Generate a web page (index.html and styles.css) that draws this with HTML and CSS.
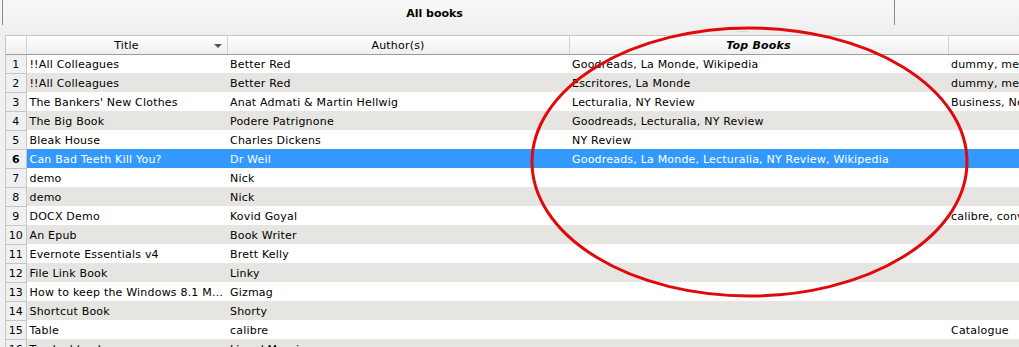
FILE: index.html
```html
<!DOCTYPE html>
<html>
	<head>
		<meta charset="UTF-8">
		<title>All books</title>
		<link rel="stylesheet" href="styles.css">
	</head>
	<body>
		<div class="wrap">
			<div class="toolbar">
				<div class="toolbar-main">All books</div>
				<div class="toolbar-side"></div>
				<div class="grip">......</div>
			</div>
			<div class="grid">
				<table class="books">
					<colgroup>
						<col class="c-num">
						<col class="c-title">
						<col class="c-author">
						<col class="c-top">
						<col class="c-tags">
					</colgroup>
					<thead>
						<tr>
							<th class="num"></th>
							<th class="sorted">Title<span class="arrow"></span></th>
							<th>Author(s)</th>
							<th class="custom">Top Books</th>
							<th></th>
						</tr>
					</thead>
					<tbody>
						<tr><td class="num">1</td><td>!!All Colleagues</td><td>Better Red</td><td>Goodreads, La Monde, Wikipedia</td><td>dummy, meta</td></tr>
						<tr><td class="num">2</td><td>!!All Colleagues</td><td>Better Red</td><td>Escritores, La Monde</td><td>dummy, meta</td></tr>
						<tr><td class="num">3</td><td>The Bankers' New Clothes</td><td>Anat Admati &amp; Martin Hellwig</td><td>Lecturalia, NY Review</td><td>Business, News</td></tr>
						<tr><td class="num">4</td><td>The Big Book</td><td>Podere Patrignone</td><td>Goodreads, Lecturalia, NY Review</td><td></td></tr>
						<tr><td class="num">5</td><td>Bleak House</td><td>Charles Dickens</td><td>NY Review</td><td></td></tr>
						<tr class="selected"><td class="num">6</td><td>Can Bad Teeth Kill You?</td><td>Dr Weil</td><td>Goodreads, La Monde, Lecturalia, NY Review, Wikipedia</td><td></td></tr>
						<tr><td class="num">7</td><td>demo</td><td>Nick</td><td></td><td></td></tr>
						<tr><td class="num">8</td><td>demo</td><td>Nick</td><td></td><td></td></tr>
						<tr><td class="num">9</td><td>DOCX Demo</td><td>Kovid Goyal</td><td></td><td>calibre, conversion</td></tr>
						<tr><td class="num">10</td><td>An Epub</td><td>Book Writer</td><td></td><td></td></tr>
						<tr><td class="num">11</td><td>Evernote Essentials v4</td><td>Brett Kelly</td><td></td><td></td></tr>
						<tr><td class="num">12</td><td>File Link Book</td><td>Linky</td><td></td><td></td></tr>
						<tr><td class="num">13</td><td>How to keep the Windows 8.1 M…</td><td>Gizmag</td><td></td><td></td></tr>
						<tr><td class="num">14</td><td>Shortcut Book</td><td>Shorty</td><td></td><td></td></tr>
						<tr><td class="num">15</td><td>Table</td><td>calibre</td><td></td><td>Catalogue</td></tr>
						<tr><td class="num">16</td><td>Tracked book</td><td>Lionel Marais</td><td></td><td></td></tr>
					</tbody>
				</table>
			</div>
			<!--红圈标注-->
			<svg class="circle" width="1019" height="347" viewBox="0 0 1019 347">
				<ellipse cx="749.5" cy="162" rx="217.5" ry="134" fill="none" stroke="#e00a0a" stroke-width="3"/>
			</svg>
		</div>
	</body>
</html>
```
FILE: styles.css
```css
*{
	margin: 0;
	padding: 0;
	box-sizing: border-box;
}
body{
	width: 1019px;
	height: 347px;
	overflow: hidden;
	background-color: #f0f0f0;
	font-family: "DejaVu Sans", Verdana, sans-serif;
	font-size: 11px;
	color: #000;
}
.wrap{
	position: relative;
	height: 100%;
}
.toolbar{
	height: 35px;
	display: flex;
	position: relative;
	background: linear-gradient(#f8f8f8, #eeeeee);
}
.toolbar-main{
	width: 893px;
	height: 25px;
	margin-left: 2px;
	border-left: 1px solid #8a8a8a;
	border-right: 1px solid #8a8a8a;
	text-align: center;
	line-height: 27px;
	font-weight: bold;
	padding-right: 28px;
}
.toolbar-side{
	flex: 1;
}
.grip{
	position: absolute;
	left: 737px;
	top: 26px;
	font-size: 6px;
	color: #9a9a9a;
}
.grid{
	margin-left: 5px;
	overflow: hidden;
	height: 312px;
	background-color: #fff;
	border-top: 1px solid #c6c6c6;
	border-left: 1px solid #c6c6c6;
}
.books{
	border-collapse: collapse;
	table-layout: fixed;
	width: 1080px;
	letter-spacing: 0.2px;
}
.c-num{ width: 20px; }
.c-title{ width: 201px; }
.c-author{ width: 342px; }
.c-top{ width: 379px; }
.c-tags{ width: 138px; }
.books th{
	height: 18px;
	font-weight: normal;
	text-align: center;
	background: linear-gradient(#ffffff, #eeeeee);
	border-right: 1px solid #d2d2d2;
	border-bottom: 1px solid #9c9c9c;
	position: relative;
	white-space: nowrap;
	padding-top: 2px;
}
.books th.custom{
	font-weight: bold;
	font-style: italic;
}
.arrow{
	position: absolute;
	right: 5px;
	top: 8px;
	border-left: 4px solid transparent;
	border-right: 4px solid transparent;
	border-top: 4px solid #555;
}
.books td{
	height: 19px;
	padding-left: 3px;
	padding-top: 1px;
	white-space: nowrap;
	overflow: hidden;
}
.books tbody tr:nth-child(even) td{
	background-color: #e7e5e2;
}
.books tbody td.num, .books tbody tr:nth-child(even) td.num{
	padding: 1px 0 0 0;
	text-align: center;
	background-color: #f0f0f0;
	border-right: 1px solid #c6c6c6;
	border-bottom: 1px solid #c6c6c6;
	letter-spacing: 0;
	color: #000;
}
.books tbody tr.selected td{
	background-color: #3399ff;
	color: #fff;
}
.books tbody tr.selected td.num{
	background-color: #f0f0f0;
	color: #000;
	font-weight: bold;
}
.circle{
	position: absolute;
	left: 0;
	top: 0;
	pointer-events: none;
}
```
